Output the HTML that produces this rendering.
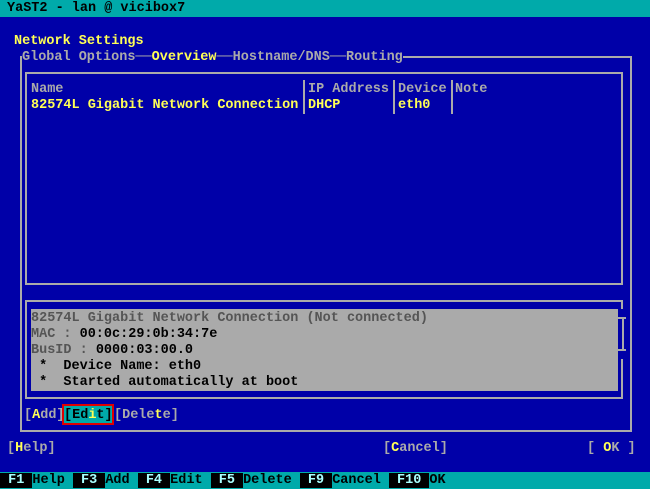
<!DOCTYPE html>
<html><head><style>
*{margin:0;padding:0;box-sizing:border-box}
body{width:650px;height:489px;background:#0000a8;position:relative;overflow:hidden;font-family:"Liberation Mono",monospace;font-size:13.5px;font-weight:bold;line-height:16px}
.t{position:absolute;white-space:pre;margin-top:2px}
.g{color:#aaaaaa}.y{color:#ffff55}.k{color:#000}.d{color:#555}
.l{position:absolute;background:#aaaaaa}
.bl{background:#0000a8}
</style></head><body>
<div style="position:absolute;left:0;top:0;width:650px;height:17px;background:#00aaaa"></div>
<div class="t k" style="left:7px;top:-1px">YaST2 - lan @ vicibox7</div>
<div class="t y" style="left:14px;top:32px">Network Settings</div>
<div class="l" style="left:20px;top:56px;width:612px;height:2px"></div>
<div class="l" style="left:20px;top:56px;width:2px;height:376px"></div>
<div class="l" style="left:630px;top:56px;width:2px;height:376px"></div>
<div class="l" style="left:20px;top:430px;width:612px;height:2px"></div>
<div class="t bl" style="left:22px;top:48px"><span class="g">Global Options</span><span class="g">──</span><span class="y">Overview</span><span class="g">──Hostname/DNS──Routing</span></div>
<div class="l" style="left:25px;top:72px;width:598px;height:2px"></div>
<div class="l" style="left:25px;top:72px;width:2px;height:213px"></div>
<div class="l" style="left:621px;top:72px;width:2px;height:213px"></div>
<div class="l" style="left:25px;top:283px;width:598px;height:2px"></div>
<div class="l" style="left:303px;top:80px;width:2px;height:34px"></div>
<div class="l" style="left:393px;top:80px;width:2px;height:34px"></div>
<div class="l" style="left:451px;top:80px;width:2px;height:34px"></div>
<div class="t g" style="left:31px;top:80px">Name</div>
<div class="t g" style="left:308px;top:80px">IP Address</div>
<div class="t g" style="left:398px;top:80px">Device</div>
<div class="t g" style="left:455px;top:80px">Note</div>
<div class="t y" style="left:31px;top:96px">82574L Gigabit Network Connection</div>
<div class="t y" style="left:308px;top:96px">DHCP</div>
<div class="t y" style="left:398px;top:96px">eth0</div>
<div class="l" style="left:25px;top:300px;width:598px;height:2px"></div>
<div class="l" style="left:25px;top:300px;width:2px;height:99px"></div>
<div class="l" style="left:25px;top:397px;width:598px;height:2px"></div>
<div class="l" style="left:621px;top:300px;width:2px;height:9px"></div>
<div class="l" style="left:622px;top:317px;width:2px;height:34px"></div>
<div class="l" style="left:617px;top:317px;width:9px;height:2px"></div>
<div class="l" style="left:617px;top:349px;width:9px;height:2px"></div>
<div class="l" style="left:621px;top:359px;width:2px;height:40px"></div>
<div style="position:absolute;left:31px;top:309px;width:587px;height:82px;background:#aaaaaa"></div>
<div class="t d" style="left:31px;top:309px">82574L Gigabit Network Connection (Not connected)</div>
<div class="t" style="left:31px;top:325px"><span class="d">MAC : </span><span class="k">00:0c:29:0b:34:7e</span></div>
<div class="t" style="left:31px;top:341px"><span class="d">BusID : </span><span class="k">0000:03:00.0</span></div>
<div class="t k" style="left:31px;top:357px"> *  Device Name: eth0</div>
<div class="t k" style="left:31px;top:373px"> *  Started automatically at boot</div>
<div class="t g" style="left:24px;top:406px">[<span class="y">A</span>dd]</div>
<div style="position:absolute;left:62px;top:404px;width:52px;height:21px;border:2px solid #e00000;background:#00aaaa"></div>
<div class="t k" style="left:64px;top:406px">[Ed<span class="y">i</span>t]</div>
<div class="t g" style="left:114px;top:406px">[Dele<span class="y">t</span>e]</div>
<div class="t g" style="left:7px;top:439px">[<span class="y">H</span>elp]</div>
<div class="t g" style="left:383px;top:439px">[<span class="y">C</span>ancel]</div>
<div class="t g" style="left:587px;top:439px">[ <span class="y">O</span>K ]</div>
<div style="position:absolute;left:0;top:472px;width:650px;height:17px;background:#00aaaa"></div>
<div class="t" style="left:0;top:471px;color:#000"><span style="background:#000;color:#aaffff"> F1 </span>Help <span style="background:#000;color:#aaffff"> F3 </span>Add <span style="background:#000;color:#aaffff"> F4 </span>Edit <span style="background:#000;color:#aaffff"> F5 </span>Delete <span style="background:#000;color:#aaffff"> F9 </span>Cancel <span style="background:#000;color:#aaffff"> F10 </span>OK</div>
</body></html>
